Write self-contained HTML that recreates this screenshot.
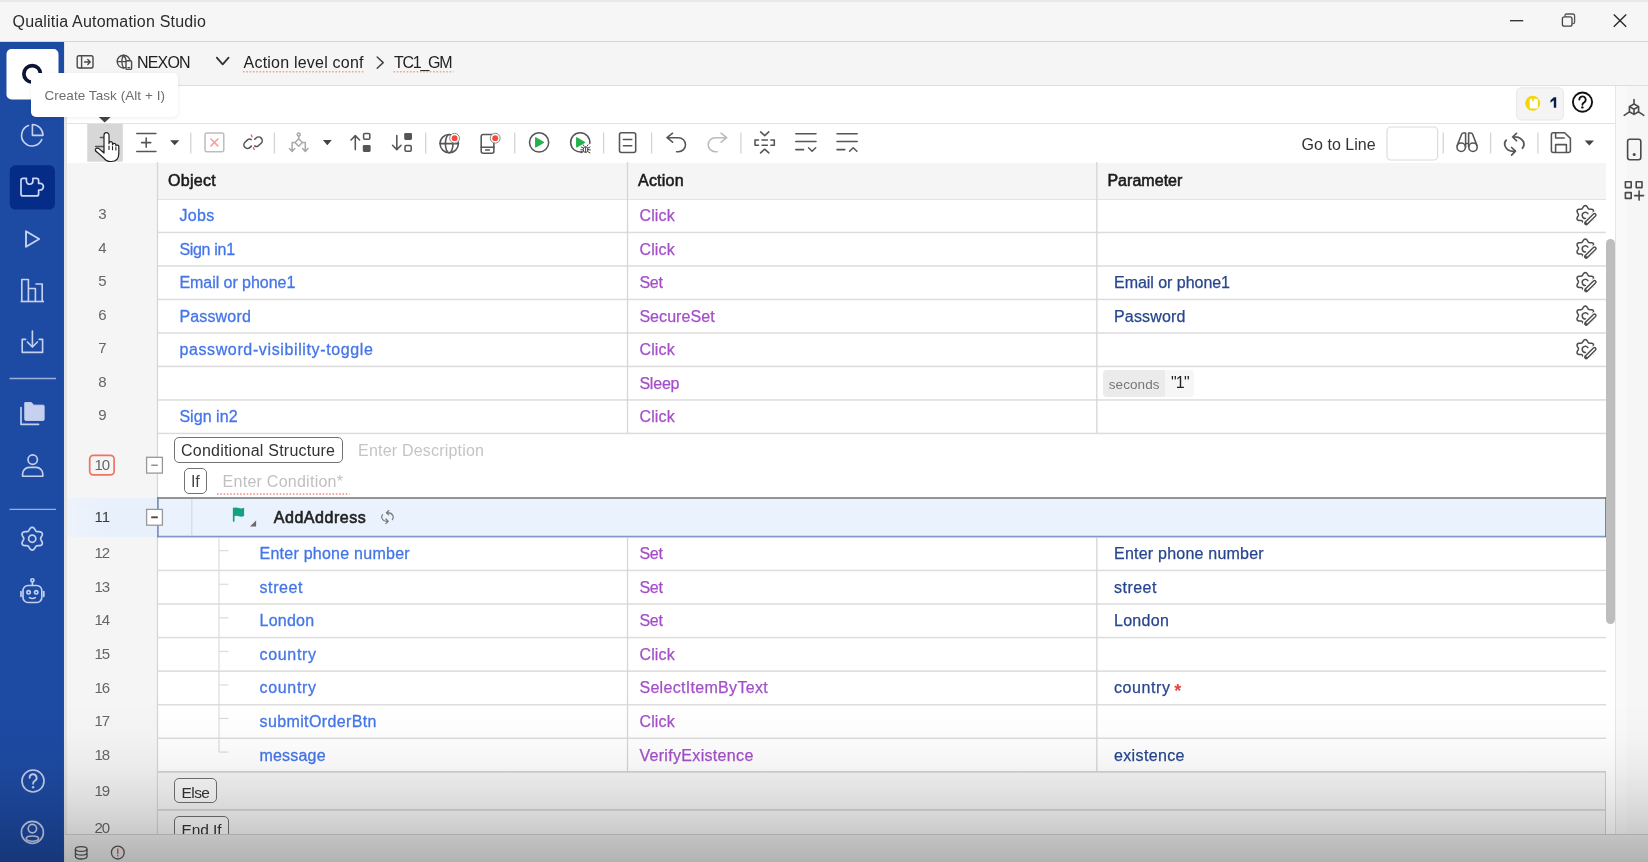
<!DOCTYPE html>
<html><head><meta charset="utf-8"><title>Qualitia Automation Studio</title>
<style>
*{box-sizing:border-box;margin:0;padding:0}
html,body{width:1648px;height:862px;overflow:hidden;background:#fff;font-family:"Liberation Sans",sans-serif;}
#root{position:relative;width:1648px;height:862px;overflow:hidden;background:#fff;filter:blur(.35px)}
.abs{position:absolute}
.txt{position:absolute;white-space:pre}
#fade{position:absolute;left:0;top:700px;width:1648px;height:162px;pointer-events:none;
background:linear-gradient(180deg,rgba(0,0,0,0) 0%,rgba(0,0,0,.012) 22%,rgba(0,0,0,.04) 40%,rgba(0,0,0,.085) 58%,rgba(0,0,0,.14) 74%,rgba(0,0,0,.20) 88%,rgba(0,0,0,.25) 100%)}
</style></head><body>
<div id="root">
<div class="abs" style="left:0px;top:0px;width:1648px;height:42px;background:#f6f6f6;border-bottom:1.5px solid #d6d6d6;"></div>
<div class="abs" style="left:0px;top:0px;width:1648px;height:2px;background:#e9e9e9;"></div>
<div class="txt" style="left:12.5px;top:11px;height:21px;line-height:21px;font-size:16px;color:#2b2b2b;font-weight:400;letter-spacing:0.198px;">Qualitia Automation Studio</div>
<div class="abs" style="left:0px;top:42px;width:64.4px;height:820px;background:#1d4aa3;border-right:1px solid #2b4b8c;"></div>
<div class="abs" style="left:64.4px;top:42px;width:2.2px;height:820px;background:#e4e4e4;"></div>
<div class="abs" style="left:65px;top:42px;width:1583px;height:43.5px;background:#f5f5f5;border-bottom:1px solid #dedede;"></div>
<div class="abs" style="left:67px;top:86px;width:1547.5px;height:38px;background:#fff;border-bottom:1.5px solid #e2e2e2;"></div>
<div class="abs" style="left:67px;top:124px;width:1547.5px;height:38px;background:#fff;"></div>
<div class="abs" style="left:1614.5px;top:86px;width:33.5px;height:748px;background:linear-gradient(90deg,#f9f9f9 0,#f9f9f9 10px,#f6f6f6 11px);border-left:1px solid #e6e6e6;"></div>
<div class="txt" style="left:137.0px;top:52px;height:21px;line-height:21px;font-size:16px;color:#222;font-weight:400;letter-spacing:-0.827px;">NEXON</div>
<div class="txt" style="left:243.6px;top:52px;height:21px;line-height:21px;font-size:16px;color:#222;font-weight:400;letter-spacing:0.212px;">Action level conf</div>
<div class="txt" style="left:394.0px;top:52px;height:21px;line-height:21px;font-size:16px;color:#222;font-weight:400;letter-spacing:-1.261px;">TC1_GM</div>
<div class="txt" style="left:1301.6px;top:134px;height:21px;line-height:21px;font-size:16px;color:#333;font-weight:400;letter-spacing:0.030px;">Go to Line</div>
<div class="abs" style="left:67px;top:162.5px;width:1539px;height:37.5px;background:#f5f5f5;border-bottom:1px solid #e2e2e2;"></div>
<div class="abs" style="left:67px;top:199px;width:90.5px;height:635px;background:#f5f5f5;"></div>
<div class="abs" style="left:1606px;top:162px;width:8.5px;height:672px;background:#fff;"></div>
<div class="txt" style="left:168.0px;top:170px;height:21px;line-height:21px;font-size:16px;color:#1a1a1a;font-weight:400;letter-spacing:0.270px;-webkit-text-stroke:0.55px #1a1a1a;">Object</div>
<div class="txt" style="left:638.0px;top:170px;height:21px;line-height:21px;font-size:16px;color:#1a1a1a;font-weight:400;letter-spacing:0.226px;-webkit-text-stroke:0.55px #1a1a1a;">Action</div>
<div class="txt" style="left:1107.4px;top:170px;height:21px;line-height:21px;font-size:16px;color:#1a1a1a;font-weight:400;letter-spacing:0.037px;-webkit-text-stroke:0.55px #1a1a1a;">Parameter</div>
<div class="txt" style="left:98.2px;top:203px;height:21px;line-height:21px;font-size:15px;color:#666;font-weight:400;letter-spacing:0.056px;">3</div>
<div class="txt" style="left:179.4px;top:205px;height:21px;line-height:21px;font-size:16px;color:#4476e8;font-weight:400;letter-spacing:0.334px;-webkit-text-stroke:0.3px #4476e8;">Jobs</div>
<div class="txt" style="left:639.4px;top:205px;height:21px;line-height:21px;font-size:16px;color:#a44fc9;font-weight:400;letter-spacing:0.182px;-webkit-text-stroke:0.25px #a44fc9;">Click</div>
<svg class="abs" style="left:157.5px;top:230px" width="1448.5" height="5"><rect x="0" y="1.70" width="1448.5" height="1.5" fill="#dcdcdc"/></svg>
<div class="txt" style="left:98.2px;top:237px;height:21px;line-height:21px;font-size:15px;color:#666;font-weight:400;letter-spacing:0.056px;">4</div>
<div class="txt" style="left:179.4px;top:239px;height:21px;line-height:21px;font-size:16px;color:#4476e8;font-weight:400;letter-spacing:-0.304px;-webkit-text-stroke:0.3px #4476e8;">Sign in1</div>
<div class="txt" style="left:639.4px;top:239px;height:21px;line-height:21px;font-size:16px;color:#a44fc9;font-weight:400;letter-spacing:0.182px;-webkit-text-stroke:0.25px #a44fc9;">Click</div>
<svg class="abs" style="left:157.5px;top:264px" width="1448.5" height="5"><rect x="0" y="1.20" width="1448.5" height="1.5" fill="#dcdcdc"/></svg>
<div class="txt" style="left:98.2px;top:270px;height:21px;line-height:21px;font-size:15px;color:#666;font-weight:400;letter-spacing:0.056px;">5</div>
<div class="txt" style="left:179.4px;top:272px;height:21px;line-height:21px;font-size:16px;color:#4476e8;font-weight:400;letter-spacing:-0.044px;-webkit-text-stroke:0.3px #4476e8;">Email or phone1</div>
<div class="txt" style="left:639.4px;top:272px;height:21px;line-height:21px;font-size:16px;color:#a44fc9;font-weight:400;letter-spacing:-0.258px;-webkit-text-stroke:0.25px #a44fc9;">Set</div>
<div class="txt" style="left:1114.0px;top:272px;height:21px;line-height:21px;font-size:16px;color:#27468f;font-weight:400;letter-spacing:-0.037px;-webkit-text-stroke:0.25px #27468f;">Email or phone1</div>
<svg class="abs" style="left:157.5px;top:297px" width="1448.5" height="5"><rect x="0" y="1.70" width="1448.5" height="1.5" fill="#dcdcdc"/></svg>
<div class="txt" style="left:98.2px;top:304px;height:21px;line-height:21px;font-size:15px;color:#666;font-weight:400;letter-spacing:0.056px;">6</div>
<div class="txt" style="left:179.4px;top:306px;height:21px;line-height:21px;font-size:16px;color:#4476e8;font-weight:400;letter-spacing:0.164px;-webkit-text-stroke:0.3px #4476e8;">Password</div>
<div class="txt" style="left:639.4px;top:306px;height:21px;line-height:21px;font-size:16px;color:#a44fc9;font-weight:400;letter-spacing:0.060px;-webkit-text-stroke:0.25px #a44fc9;">SecureSet</div>
<div class="txt" style="left:1114.0px;top:306px;height:21px;line-height:21px;font-size:16px;color:#27468f;font-weight:400;letter-spacing:0.179px;-webkit-text-stroke:0.25px #27468f;">Password</div>
<svg class="abs" style="left:157.5px;top:331px" width="1448.5" height="5"><rect x="0" y="1.20" width="1448.5" height="1.5" fill="#dcdcdc"/></svg>
<div class="txt" style="left:98.2px;top:337px;height:21px;line-height:21px;font-size:15px;color:#666;font-weight:400;letter-spacing:0.056px;">7</div>
<div class="txt" style="left:179.4px;top:339px;height:21px;line-height:21px;font-size:16px;color:#4476e8;font-weight:400;letter-spacing:0.626px;-webkit-text-stroke:0.3px #4476e8;">password-visibility-toggle</div>
<div class="txt" style="left:639.4px;top:339px;height:21px;line-height:21px;font-size:16px;color:#a44fc9;font-weight:400;letter-spacing:0.182px;-webkit-text-stroke:0.25px #a44fc9;">Click</div>
<svg class="abs" style="left:157.5px;top:364px" width="1448.5" height="5"><rect x="0" y="1.70" width="1448.5" height="1.5" fill="#dcdcdc"/></svg>
<div class="txt" style="left:98.2px;top:371px;height:21px;line-height:21px;font-size:15px;color:#666;font-weight:400;letter-spacing:0.056px;">8</div>
<div class="txt" style="left:639.4px;top:373px;height:21px;line-height:21px;font-size:16px;color:#a44fc9;font-weight:400;letter-spacing:-0.205px;-webkit-text-stroke:0.25px #a44fc9;">Sleep</div>
<svg class="abs" style="left:157.5px;top:398px" width="1448.5" height="5"><rect x="0" y="1.20" width="1448.5" height="1.5" fill="#dcdcdc"/></svg>
<div class="txt" style="left:98.2px;top:404px;height:21px;line-height:21px;font-size:15px;color:#666;font-weight:400;letter-spacing:0.056px;">9</div>
<div class="txt" style="left:179.4px;top:406px;height:21px;line-height:21px;font-size:16px;color:#4476e8;font-weight:400;letter-spacing:0.053px;-webkit-text-stroke:0.3px #4476e8;">Sign in2</div>
<div class="txt" style="left:639.4px;top:406px;height:21px;line-height:21px;font-size:16px;color:#a44fc9;font-weight:400;letter-spacing:0.182px;-webkit-text-stroke:0.25px #a44fc9;">Click</div>
<svg class="abs" style="left:157.5px;top:431px" width="1448.5" height="5"><rect x="0" y="1.70" width="1448.5" height="1.5" fill="#dcdcdc"/></svg>
<svg class="abs" style="left:155px;top:162px" width="5" height="672"><rect x="1.85" y="0" width="1.3" height="672" fill="#d6d6d6"/></svg>
<svg class="abs" style="left:625px;top:162px" width="5" height="271.4"><rect x="1.85" y="0" width="1.3" height="271.4" fill="#d6d6d6"/></svg>
<svg class="abs" style="left:1095px;top:162px" width="5" height="271.4"><rect x="1.15" y="0" width="1.3" height="271.4" fill="#d6d6d6"/></svg>
<div class="abs" style="left:1103px;top:370px;width:91.3px;height:26.7px;background:#f6f6f6;border-radius:4px;"></div>
<div class="abs" style="left:1103px;top:370px;width:62.2px;height:26.7px;background:#ebebeb;border-radius:4px 0 0 4px;"></div>
<div class="txt" style="left:1108.8px;top:375px;height:19px;line-height:19px;font-size:13.5px;color:#777;font-weight:400;letter-spacing:0.067px;">seconds</div>
<div class="txt" style="left:1171.0px;top:372px;height:21px;line-height:21px;font-size:16px;color:#222;font-weight:400;letter-spacing:-0.833px;">"1"</div>
<div class="txt" style="left:94.6px;top:454px;height:21px;line-height:21px;font-size:15px;color:#666;font-weight:400;letter-spacing:-1.088px;">10</div>
<div class="abs" style="left:174px;top:437px;width:169px;height:25.8px;background:#fff;border:1.3px solid #727272;border-radius:5px;"></div>
<div class="txt" style="left:181.0px;top:440px;height:21px;line-height:21px;font-size:16px;color:#333;font-weight:400;letter-spacing:0.229px;">Conditional Structure</div>
<div class="txt" style="left:358.0px;top:440px;height:21px;line-height:21px;font-size:16px;color:#c4c4c4;font-weight:400;letter-spacing:0.205px;">Enter Description</div>
<div class="abs" style="left:183.8px;top:468px;width:23px;height:25.8px;background:#fff;border:1.3px solid #727272;border-radius:5px;"></div>
<div class="txt" style="left:191.0px;top:471px;height:21px;line-height:21px;font-size:16px;color:#444;font-weight:400;letter-spacing:-0.291px;">If</div>
<div class="txt" style="left:222.6px;top:471px;height:21px;line-height:21px;font-size:16px;color:#c0c0c0;font-weight:400;letter-spacing:0.259px;">Enter Condition*</div>
<div class="abs" style="left:67px;top:497.6px;width:90.5px;height:39px;background:linear-gradient(90deg,#eef3fb,#e8f0fc 50%);"></div>
<div class="abs" style="left:157.5px;top:497.5px;width:1448.8px;height:39.3px;background:#eaf2fd;"></div>
<svg class="abs" style="left:157px;top:496px" width="1449.6" height="5"><rect x="0" y="1.20" width="1449.6" height="1.6" fill="#7c7c7c"/></svg>
<svg class="abs" style="left:157px;top:534px" width="1449.6" height="5"><rect x="0" y="1.75" width="1449.6" height="1.7" fill="#8298c4"/></svg>
<svg class="abs" style="left:156px;top:497.2px" width="5" height="40.19999999999999"><rect x="1.10" y="0" width="1.6" height="40.19999999999999" fill="#7488b4"/></svg>
<svg class="abs" style="left:1604px;top:497.2px" width="5" height="40.19999999999999"><rect x="1.20" y="0" width="1.4" height="40.19999999999999" fill="#6a6a6a"/></svg>
<svg class="abs" style="left:190px;top:499px" width="5" height="37"><rect x="1.20" y="0" width="1.2" height="37" fill="#d3dae6"/></svg>
<div class="txt" style="left:94.6px;top:506px;height:21px;line-height:21px;font-size:15px;color:#3a3a3a;font-weight:400;letter-spacing:0.022px;">11</div>
<div class="txt" style="left:273.8px;top:507px;height:21px;line-height:21px;font-size:16px;color:#222;font-weight:400;letter-spacing:0.536px;-webkit-text-stroke:0.6px #222;">AddAddress</div>
<div class="txt" style="left:94.6px;top:542px;height:21px;line-height:21px;font-size:15px;color:#666;font-weight:400;letter-spacing:-1.088px;">12</div>
<div class="txt" style="left:259.5px;top:543px;height:21px;line-height:21px;font-size:16px;color:#4476e8;font-weight:400;letter-spacing:0.249px;-webkit-text-stroke:0.3px #4476e8;">Enter phone number</div>
<div class="txt" style="left:639.4px;top:543px;height:21px;line-height:21px;font-size:16px;color:#a44fc9;font-weight:400;letter-spacing:-0.258px;-webkit-text-stroke:0.25px #a44fc9;">Set</div>
<div class="txt" style="left:1114.0px;top:543px;height:21px;line-height:21px;font-size:16px;color:#27468f;font-weight:400;letter-spacing:0.225px;-webkit-text-stroke:0.25px #27468f;">Enter phone number</div>
<svg class="abs" style="left:219px;top:549px" width="9.5" height="5"><rect x="0" y="1.15" width="9.5" height="1.1" fill="#d9d9d9"/></svg>
<svg class="abs" style="left:157.5px;top:568px" width="1448.5" height="5"><rect x="0" y="1.71" width="1448.5" height="1.5" fill="#dcdcdc"/></svg>
<div class="txt" style="left:94.6px;top:576px;height:21px;line-height:21px;font-size:15px;color:#666;font-weight:400;letter-spacing:-1.088px;">13</div>
<div class="txt" style="left:259.5px;top:577px;height:21px;line-height:21px;font-size:16px;color:#4476e8;font-weight:400;letter-spacing:0.597px;-webkit-text-stroke:0.3px #4476e8;">street</div>
<div class="txt" style="left:639.4px;top:577px;height:21px;line-height:21px;font-size:16px;color:#a44fc9;font-weight:400;letter-spacing:-0.258px;-webkit-text-stroke:0.25px #a44fc9;">Set</div>
<div class="txt" style="left:1114.0px;top:577px;height:21px;line-height:21px;font-size:16px;color:#27468f;font-weight:400;letter-spacing:0.477px;-webkit-text-stroke:0.25px #27468f;">street</div>
<svg class="abs" style="left:219px;top:582px" width="9.5" height="5"><rect x="0" y="1.71" width="9.5" height="1.1" fill="#d9d9d9"/></svg>
<svg class="abs" style="left:157.5px;top:602px" width="1448.5" height="5"><rect x="0" y="1.27" width="1448.5" height="1.5" fill="#dcdcdc"/></svg>
<div class="txt" style="left:94.6px;top:609px;height:21px;line-height:21px;font-size:15px;color:#666;font-weight:400;letter-spacing:-1.088px;">14</div>
<div class="txt" style="left:259.5px;top:610px;height:21px;line-height:21px;font-size:16px;color:#4476e8;font-weight:400;letter-spacing:0.242px;-webkit-text-stroke:0.3px #4476e8;">London</div>
<div class="txt" style="left:639.4px;top:610px;height:21px;line-height:21px;font-size:16px;color:#a44fc9;font-weight:400;letter-spacing:-0.258px;-webkit-text-stroke:0.25px #a44fc9;">Set</div>
<div class="txt" style="left:1114.0px;top:610px;height:21px;line-height:21px;font-size:16px;color:#27468f;font-weight:400;letter-spacing:0.282px;-webkit-text-stroke:0.25px #27468f;">London</div>
<svg class="abs" style="left:219px;top:616px" width="9.5" height="5"><rect x="0" y="1.27" width="9.5" height="1.1" fill="#d9d9d9"/></svg>
<svg class="abs" style="left:157.5px;top:635px" width="1448.5" height="5"><rect x="0" y="1.83" width="1448.5" height="1.5" fill="#dcdcdc"/></svg>
<div class="txt" style="left:94.6px;top:643px;height:21px;line-height:21px;font-size:15px;color:#666;font-weight:400;letter-spacing:-1.088px;">15</div>
<div class="txt" style="left:259.5px;top:644px;height:21px;line-height:21px;font-size:16px;color:#4476e8;font-weight:400;letter-spacing:0.672px;-webkit-text-stroke:0.3px #4476e8;">country</div>
<div class="txt" style="left:639.4px;top:644px;height:21px;line-height:21px;font-size:16px;color:#a44fc9;font-weight:400;letter-spacing:0.182px;-webkit-text-stroke:0.25px #a44fc9;">Click</div>
<svg class="abs" style="left:219px;top:649px" width="9.5" height="5"><rect x="0" y="1.83" width="9.5" height="1.1" fill="#d9d9d9"/></svg>
<svg class="abs" style="left:157.5px;top:669px" width="1448.5" height="5"><rect x="0" y="1.39" width="1448.5" height="1.5" fill="#dcdcdc"/></svg>
<div class="txt" style="left:94.6px;top:677px;height:21px;line-height:21px;font-size:15px;color:#666;font-weight:400;letter-spacing:-1.088px;">16</div>
<div class="txt" style="left:259.5px;top:677px;height:21px;line-height:21px;font-size:16px;color:#4476e8;font-weight:400;letter-spacing:0.672px;-webkit-text-stroke:0.3px #4476e8;">country</div>
<div class="txt" style="left:639.4px;top:677px;height:21px;line-height:21px;font-size:16px;color:#a44fc9;font-weight:400;letter-spacing:0.313px;-webkit-text-stroke:0.25px #a44fc9;">SelectItemByText</div>
<div class="txt" style="left:1114.0px;top:677px;height:21px;line-height:21px;font-size:16px;color:#27468f;font-weight:400;letter-spacing:0.589px;-webkit-text-stroke:0.25px #27468f;">country</div>
<svg class="abs" style="left:219px;top:683px" width="9.5" height="5"><rect x="0" y="1.39" width="9.5" height="1.1" fill="#d9d9d9"/></svg>
<svg class="abs" style="left:157.5px;top:702px" width="1448.5" height="5"><rect x="0" y="1.95" width="1448.5" height="1.5" fill="#dcdcdc"/></svg>
<div class="txt" style="left:94.6px;top:710px;height:21px;line-height:21px;font-size:15px;color:#666;font-weight:400;letter-spacing:-1.088px;">17</div>
<div class="txt" style="left:259.5px;top:711px;height:21px;line-height:21px;font-size:16px;color:#4476e8;font-weight:400;letter-spacing:0.381px;-webkit-text-stroke:0.3px #4476e8;">submitOrderBtn</div>
<div class="txt" style="left:639.4px;top:711px;height:21px;line-height:21px;font-size:16px;color:#a44fc9;font-weight:400;letter-spacing:0.182px;-webkit-text-stroke:0.25px #a44fc9;">Click</div>
<svg class="abs" style="left:219px;top:716px" width="9.5" height="5"><rect x="0" y="1.95" width="9.5" height="1.1" fill="#d9d9d9"/></svg>
<svg class="abs" style="left:157.5px;top:736px" width="1448.5" height="5"><rect x="0" y="1.51" width="1448.5" height="1.5" fill="#dcdcdc"/></svg>
<div class="txt" style="left:94.6px;top:744px;height:21px;line-height:21px;font-size:15px;color:#666;font-weight:400;letter-spacing:-1.088px;">18</div>
<div class="txt" style="left:259.5px;top:745px;height:21px;line-height:21px;font-size:16px;color:#4476e8;font-weight:400;letter-spacing:0.196px;-webkit-text-stroke:0.3px #4476e8;">message</div>
<div class="txt" style="left:639.4px;top:745px;height:21px;line-height:21px;font-size:16px;color:#a44fc9;font-weight:400;letter-spacing:0.322px;-webkit-text-stroke:0.25px #a44fc9;">VerifyExistence</div>
<div class="txt" style="left:1114.0px;top:745px;height:21px;line-height:21px;font-size:16px;color:#27468f;font-weight:400;letter-spacing:0.363px;-webkit-text-stroke:0.25px #27468f;">existence</div>
<svg class="abs" style="left:219px;top:750px" width="9.5" height="5"><rect x="0" y="1.51" width="9.5" height="1.1" fill="#d9d9d9"/></svg>
<svg class="abs" style="left:157.5px;top:770px" width="1448.5" height="5"><rect x="0" y="1.07" width="1448.5" height="1.5" fill="#dcdcdc"/></svg>
<div class="txt" style="left:1174.2px;top:679px;height:24px;line-height:24px;font-size:18px;color:#e5443a;font-weight:700;letter-spacing:0.000px;">*</div>
<svg class="abs" style="left:217px;top:537.5px" width="5" height="214.5"><rect x="1.45" y="0" width="1.1" height="214.5" fill="#d9d9d9"/></svg>
<svg class="abs" style="left:625px;top:537.5px" width="5" height="234.0"><rect x="1.85" y="0" width="1.3" height="234.0" fill="#d6d6d6"/></svg>
<svg class="abs" style="left:1095px;top:537.5px" width="5" height="234.0"><rect x="1.15" y="0" width="1.3" height="234.0" fill="#d6d6d6"/></svg>
<div class="abs" style="left:157.5px;top:772.2px;width:1448.5px;height:62px;background:#f6f6f6;border-right:1px solid #cfcfcf;"></div>
<svg class="abs" style="left:157.5px;top:808px" width="1448.5" height="5"><rect x="0" y="1.15" width="1448.5" height="1.5" fill="#cfcfcf"/></svg>
<svg class="abs" style="left:157.5px;top:770px" width="1448.5" height="5"><rect x="0" y="1.15" width="1448.5" height="1.5" fill="#cfcfcf"/></svg>
<div class="txt" style="left:94.6px;top:780px;height:21px;line-height:21px;font-size:15px;color:#666;font-weight:400;letter-spacing:-1.088px;">19</div>
<div class="txt" style="left:94.6px;top:817px;height:21px;line-height:21px;font-size:15px;color:#666;font-weight:400;letter-spacing:-1.088px;">20</div>
<div class="abs" style="left:174.3px;top:778.4px;width:42.8px;height:25px;background:#fafafa;border:1.3px solid #727272;border-radius:5px;"></div>
<div class="txt" style="left:181.4px;top:782px;height:21px;line-height:21px;font-size:15.5px;color:#333;font-weight:400;letter-spacing:-0.519px;">Else</div>
<div class="abs" style="left:174.3px;top:816px;width:54.4px;height:25px;background:#fafafa;border:1.3px solid #727272;border-radius:5px;"></div>
<div class="txt" style="left:181.4px;top:819px;height:21px;line-height:21px;font-size:15.5px;color:#333;font-weight:400;letter-spacing:-0.060px;">End If</div>
<div class="abs" style="left:1606px;top:239px;width:8.6px;height:384.5px;background:#bdbdbd;border-radius:4.5px;"></div>
<div class="abs" style="left:65px;top:834px;width:1583px;height:28px;background:#eeeeee;border-top:1px solid #d0d0d0;"></div>
<svg class="abs" style="left:0;top:0" width="1648" height="862" viewBox="0 0 1648 862">
<rect x="6.5" y="49" width="52" height="50.5" rx="5" fill="#fff"/>
<circle cx="32.2" cy="73.9" r="8.3" fill="none" stroke="#0a1634" stroke-width="3.7"/>
<g fill="none" stroke="#c5d1ef" stroke-width="1.65" stroke-linecap="round" stroke-linejoin="round"><path d="M41.8 139.5 A10.5 10.5 0 1 1 28.5 125.6"/><path d="M43 135.3 A10.8 10.8 0 0 0 32.4 124.5 V135.3 Z"/></g>
<rect x="9.8" y="165.3" width="45.1" height="44.2" rx="5.5" fill="#052c86"/>
<path d="M23 178.3 H26.4 V181 a3.25 3.25 0 0 0 6.5 0 V178.3 H36.6 a2 2 0 0 1 2 2 V183.4 h1.5 a3.3 3.3 0 0 1 0 6.6 h-1.5 V193.9 a2 2 0 0 1 -2 2 H23 a2 2 0 0 1 -2 -2 V180.3 a2 2 0 0 1 2 -2 Z" fill="none" stroke="#ccd8f6" stroke-width="1.7" stroke-linejoin="round"/>
<path d="M26 231.2 L39.2 239 L26 246.8 Z" fill="none" stroke="#c5d1ef" stroke-width="1.9" stroke-linejoin="round"/>
<g fill="none" stroke="#c5d1ef" stroke-width="1.65" stroke-linejoin="round"><path d="M21.8 301.5 V279.5 h6.6 V301.5"/><path d="M28.4 288.5 h7 V301.5"/><path d="M35.4 284 h6.8 V301.5"/><path d="M20.6 301.5 H44"/></g>
<g fill="none" stroke="#c5d1ef" stroke-width="1.65" stroke-linecap="round" stroke-linejoin="round"><path d="M32.4 331 V346.6"/><path d="M27.4 342 L32.4 347 L37.4 342"/><path d="M25.6 339.4 H22.2 V352.4 H42.6 V339.4 H39.2"/></g>
<path d="M9.5 378.5 H56" stroke="#c5d1ef" stroke-width="1.4" opacity=".75"/>
<path d="M21 407.6 V424.4 H38.6" fill="none" stroke="#c5d1ef" stroke-width="1.65" stroke-linejoin="round" stroke-linecap="round"/>
<path d="M24.8 402.6 h6.6 l2.3 2.6 h9.6 a.8 .8 0 0 1 .8 .8 V419.6 a.8 .8 0 0 1 -.8 .8 H25.6 a.8 .8 0 0 1 -.8 -.8 z" fill="#c5d1ef" stroke="#c5d1ef" stroke-width="1"/>
<g fill="none" stroke="#c5d1ef" stroke-width="1.65" stroke-linejoin="round"><circle cx="32.7" cy="459.6" r="4.7"/><path d="M22.6 476.2 v-2.2 a6.6 6.6 0 0 1 6.6 -6.6 h7 a6.6 6.6 0 0 1 6.6 6.6 v2.2 z"/></g>
<path d="M9.5 509.4 H56" stroke="#c5d1ef" stroke-width="1.4" opacity=".75"/>
<path d="M32.20 527.30 L32.94 527.44 L33.63 527.83 L34.24 528.43 L34.76 529.14 L35.20 529.87 L35.58 530.53 L35.97 531.06 L36.40 531.43 L36.93 531.62 L37.58 531.69 L38.35 531.69 L39.20 531.70 L40.07 531.79 L40.90 532.03 L41.58 532.43 L42.07 533.00 L42.32 533.71 L42.33 534.51 L42.12 535.33 L41.76 536.14 L41.35 536.88 L40.96 537.55 L40.70 538.14 L40.60 538.70 L40.70 539.26 L40.96 539.85 L41.35 540.52 L41.76 541.26 L42.12 542.07 L42.33 542.89 L42.32 543.69 L42.07 544.40 L41.58 544.97 L40.90 545.37 L40.07 545.61 L39.20 545.70 L38.35 545.71 L37.58 545.71 L36.93 545.78 L36.40 545.97 L35.97 546.34 L35.58 546.87 L35.20 547.53 L34.76 548.26 L34.24 548.97 L33.63 549.57 L32.94 549.96 L32.20 550.10 L31.46 549.96 L30.77 549.57 L30.16 548.97 L29.64 548.26 L29.20 547.53 L28.82 546.87 L28.43 546.34 L28.00 545.97 L27.47 545.78 L26.82 545.71 L26.05 545.71 L25.20 545.70 L24.33 545.61 L23.50 545.37 L22.82 544.97 L22.33 544.40 L22.08 543.69 L22.07 542.89 L22.28 542.07 L22.64 541.26 L23.05 540.52 L23.44 539.85 L23.70 539.26 L23.80 538.70 L23.70 538.14 L23.44 537.55 L23.05 536.88 L22.64 536.14 L22.28 535.33 L22.07 534.51 L22.08 533.71 L22.33 533.00 L22.82 532.43 L23.50 532.03 L24.33 531.79 L25.20 531.70 L26.05 531.69 L26.82 531.69 L27.47 531.62 L28.00 531.43 L28.43 531.06 L28.82 530.53 L29.20 529.87 L29.64 529.14 L30.16 528.43 L30.77 527.83 L31.46 527.44Z" fill="none" stroke="#c5d1ef" stroke-width="1.7" stroke-linejoin="round"/><circle cx="32.2" cy="538.7" r="3.6" fill="none" stroke="#c5d1ef" stroke-width="1.7"/>
<g fill="none" stroke="#c5d1ef" stroke-width="1.65" stroke-linejoin="round" stroke-linecap="round"><rect x="23" y="585.5" width="18.8" height="17" rx="5"/><path d="M32.4 585.5 V582"/><circle cx="32.4" cy="580.3" r="1.6"/><path d="M21 591.5 v5 M43.8 591.5 v5"/><circle cx="28.6" cy="592.3" r="1.7"/><circle cx="36.2" cy="592.3" r="1.7"/><path d="M29.5 597.6 q2.9 1.8 5.8 0"/></g>
<circle cx="33" cy="781" r="11" fill="none" stroke="#c5d1ef" stroke-width="1.65"/>
<path d="M29.6 777.8 a3.5 3.5 0 1 1 5.2 3 q-1.7 1 -1.7 2.9" fill="none" stroke="#c5d1ef" stroke-width="1.9" stroke-linecap="round"/><circle cx="33.1" cy="787.2" r="1.2" fill="#c5d1ef"/>
<g fill="none" stroke="#c5d1ef" stroke-width="1.65"><circle cx="32.4" cy="832.4" r="11"/><circle cx="32.4" cy="828.6" r="4.2"/><ellipse cx="32.4" cy="838.6" rx="6.2" ry="2.6"/></g>
<rect x="87.2" y="124" width="35.6" height="37.7" fill="#d7d7d7"/>
<g fill="none" stroke="#555" stroke-width="1.55" stroke-linecap="round" stroke-linejoin="round"><path d="M100.5 137.4 H108 M95.6 146.4 H112 M96 151.4 H112"/></g>
<path d="M104 146.5 V135.2 a2.5 2.5 0 0 1 5 0 V143.6 a1.75 1.75 0 0 1 3.5 -.4 V144.8 a1.75 1.75 0 0 1 3.4 -.2 V146 a1.5 1.5 0 0 1 2.9 .4 V153.5 q0 8 -7.6 8 h-1.2 q-3.6 0 -6 -3.2 L95.8 151 q-1.2 -1.7 .4 -2.6 q1.5 -.8 3 .5 L104 153 Z" fill="#fff" stroke="#222" stroke-width="1.2" stroke-linejoin="round"/><path d="M109 146 V149.5 M112.5 146.5 V149.8 M115.9 147.5 V150" stroke="#222" stroke-width="1.1" stroke-linecap="round"/>
<g fill="none" stroke="#555" stroke-width="1.55" stroke-linecap="round" stroke-linejoin="round"><path d="M136.8 133.5 H155.9 M136.8 151.4 H155.9 M141.6 142.6 H150.8 M146.2 138 V147.2"/></g>
<path d="M170.1 140.2 H179.3 L174.7 145.2 Z" fill="#444"/>
<path d="M190.8 132.5 V153.5" stroke="#d4d4d4" stroke-width="1.3"/>
<rect x="205" y="133" width="18.8" height="18.8" rx="2" fill="none" stroke="#bdbdbd" stroke-width="1.5"/>
<path d="M211 139 L217.8 145.8 M217.8 139 L211 145.8" stroke="#f6a39b" stroke-width="1.7" stroke-linecap="round"/>
<g fill="none" stroke="#555" stroke-width="1.55" stroke-linecap="round" stroke-linejoin="round" stroke-width="1.9"><path d="M251.2 139.6 q-1.6 -1.3 -3.4 0 l-2.8 2.6 a3.6 3.6 0 0 0 5 5.2 l1.4 -1.3"/><path d="M254.8 146 q1.7 1.2 3.5 -.2 l2.8 -2.6 a3.6 3.6 0 0 0 -5 -5.2 l-1.4 1.3"/></g>
<path d="M251.3 135 l.7 1.9 M253.4 147.6 l.8 1.9" stroke="#f0524a" stroke-width="1.3" stroke-linecap="round"/>
<path d="M274.4 132.5 V153.5" stroke="#d4d4d4" stroke-width="1.3"/>
<g fill="none" stroke="#a9a9a9" stroke-width="1.5" stroke-linecap="round" stroke-linejoin="round"><circle cx="298.7" cy="134.4" r="1.5"/><path d="M298.7 136 V138.8 M298.7 138.8 L302.4 142.5 L298.7 146.2 L295 142.5 Z M295 142.5 H292.1 V151 M302.4 142.5 H305.3 V151 M289.4 148.6 L292.1 151.4 L294.8 148.6 M302.6 148.6 L305.3 151.4 L308 148.6"/></g>
<path d="M322.9 139.9 H331.8 L327.35 145.2 Z" fill="#444"/>
<g fill="none" stroke="#555" stroke-width="1.55" stroke-linecap="round" stroke-linejoin="round"><path d="M355.3 149.6 V135.8 M351 140 L355.3 135.6 L359.6 140"/><rect x="363.6" y="133.4" width="6.2" height="5.8" rx="1.2"/></g>
<rect x="362.8" y="145" width="7.8" height="6.9" rx="1.3" fill="#555"/>
<g fill="none" stroke="#555" stroke-width="1.55" stroke-linecap="round" stroke-linejoin="round"><path d="M396.8 135.6 V149.4 M392.5 145.2 L396.8 149.6 L401.1 145.2"/><rect x="405" y="145.5" width="6.2" height="5.8" rx="1.2"/></g>
<rect x="404.2" y="133" width="7.8" height="6.9" rx="1.3" fill="#555"/>
<path d="M425.7 132.5 V153.5" stroke="#d4d4d4" stroke-width="1.3"/>
<g fill="none" stroke="#555" stroke-width="1.55" stroke-linecap="round" stroke-linejoin="round"><circle cx="449.2" cy="143.6" r="9.2"/><ellipse cx="449.2" cy="143.6" rx="3.8" ry="9.2"/><path d="M440 143.6 H458.4"/></g>
<circle cx="454.6" cy="138.2" r="4.9" fill="#fff" stroke="#8a8a8a" stroke-width="1"/><circle cx="454.6" cy="138.2" r="2.9" fill="#f5483d"/>
<g fill="none" stroke="#555" stroke-width="1.55" stroke-linecap="round" stroke-linejoin="round"><rect x="481.2" y="134.5" width="12.7" height="18.8" rx="2"/><path d="M481.2 147.2 H493.9 M485.6 149.9 H489.4"/></g>
<circle cx="495.2" cy="138.2" r="4.9" fill="#fff" stroke="#8a8a8a" stroke-width="1"/><circle cx="495.2" cy="138.2" r="2.9" fill="#f5483d"/>
<path d="M514.7 132.5 V153.5" stroke="#d4d4d4" stroke-width="1.3"/>
<circle cx="539.1" cy="142.4" r="9.6" fill="none" stroke="#555" stroke-width="1.55" stroke-linecap="round" stroke-linejoin="round"/><path d="M535.6 137.6 L543.9 142.4 L535.6 147.2 Z" fill="#22b14c" stroke="#22b14c" stroke-width="1" stroke-linejoin="round"/>
<path d="M582 151.8 A9.6 9.6 0 1 1 589.8 143.4" fill="none" stroke="#555" stroke-width="1.55" stroke-linecap="round" stroke-linejoin="round"/><path d="M576.6 137.6 L584.9 142.4 L576.6 147.2 Z" fill="#22b14c" stroke="#22b14c" stroke-width="1" stroke-linejoin="round"/>
<g stroke="#444" stroke-width="1" stroke-linecap="round"><ellipse cx="585.6" cy="149.6" rx="2.4" ry="2.9" fill="#fff"/><path d="M585.6 147.4 V152"/><path d="M581.2 147 l2 1 M590 147 l-2 1 M580.8 149.8 h2.2 M590.4 149.8 h-2.2 M581.2 152.8 l2 -1 M590 152.8 l-2 -1 M584 146 l-.8 -1.2 M587.2 146 l.8 -1.2"/></g>
<path d="M603.6 132.5 V153.5" stroke="#d4d4d4" stroke-width="1.3"/>
<g fill="none" stroke="#555" stroke-width="1.55" stroke-linecap="round" stroke-linejoin="round" stroke-width="1.8"><rect x="619.5" y="132.8" width="16.2" height="19.6" rx="2"/><path d="M623.4 139.4 H631.8 M623.4 145.7 H631.8"/></g>
<path d="M651.6 132.5 V153.5" stroke="#d4d4d4" stroke-width="1.3"/>
<path d="M672.6 133.2 L667 137.7 L672.6 142.2 M667 137.7 H678.5 a7 7 0 0 1 0 14 H676.6" fill="none" stroke="#555" stroke-width="1.55" stroke-linecap="round" stroke-linejoin="round"/>
<path d="M721.1 133.2 L726.7 137.7 L721.1 142.2 M726.7 137.7 H715.2 a7 7 0 0 0 0 14 H717.1" fill="none" stroke="#bcbcbc" stroke-width="1.6" stroke-linecap="round" stroke-linejoin="round"/>
<path d="M740.9 132.5 V153.5" stroke="#d4d4d4" stroke-width="1.3"/>
<g fill="none" stroke="#555" stroke-width="1.55" stroke-linecap="round" stroke-linejoin="round"><path d="M760.6 131.9 L764.7 135.6 L768.8 131.9 M760.6 152.9 L764.7 149.2 L768.8 152.9"/><path d="M758.5 139.9 H755 V145.2 H758.5 M770.9 139.9 H774.3 V145.2 H770.9 M762 139.9 H767.4 M762 145.2 H767.4"/></g>
<g fill="none" stroke="#555" stroke-width="1.55" stroke-linecap="round" stroke-linejoin="round"><path d="M795.8 133.8 H816 M795.8 141.5 H816 M795.8 149.6 H803.6 M808.6 147.8 L812.1 151.2 L815.7 147.8"/></g>
<g fill="none" stroke="#555" stroke-width="1.55" stroke-linecap="round" stroke-linejoin="round"><path d="M837 133.8 H857.2 M837 141.5 H857.2 M837 149.6 H844.8 M849.6 151.2 L853.2 147.7 L856.9 151.2"/></g>
<rect x="1387" y="127" width="50.6" height="33" rx="4" fill="#fff" stroke="#dcdcdc" stroke-width="1.2"/>
<path d="M1443.2 132.5 V153.5" stroke="#d4d4d4" stroke-width="1.3"/>
<path d="M1490.6 132.5 V153.5" stroke="#d4d4d4" stroke-width="1.3"/>
<path d="M1537.9 132.5 V153.5" stroke="#d4d4d4" stroke-width="1.3"/>
<g fill="none" stroke="#555" stroke-width="1.55" stroke-linecap="round" stroke-linejoin="round"><circle cx="1461.2" cy="147.2" r="4.2"/><circle cx="1473" cy="147.2" r="4.2"/><path d="M1457.2 145.6 L1461.6 134.2 q.5 -1.2 1.8 -1.2 h2.2 V147 M1477 145.6 L1472.6 134.2 q-.5 -1.2 -1.8 -1.2 h-2.2 V147 M1465.6 143.4 H1468.6 M1465.6 133 V143"/></g>
<path d="M1512.60 137.00 Q1520.50 136.00 1523.60 142.00 Q1524.80 145.50 1522.40 148.30 M1516.50 133.30 L1512.60 137.00 L1516.50 140.60 M1515.50 151.20 Q1507.60 152.20 1505.00 146.00 Q1503.80 142.80 1506.20 140.20 M1511.60 147.50 L1515.50 151.20 L1511.60 155.20" fill="none" stroke="#555" stroke-width="1.7" stroke-linecap="round" stroke-linejoin="round"/>
<g fill="none" stroke="#555" stroke-width="1.55" stroke-linecap="round" stroke-linejoin="round" stroke-width="1.8"><path d="M1553.4 132.8 H1564.6 L1570.4 138.4 V150.4 a2 2 0 0 1 -2 2 H1553.4 a2 2 0 0 1 -2 -2 V134.8 a2 2 0 0 1 2 -2 Z"/><path d="M1555.6 133 V138 H1564.2 M1555.6 152.2 V144.6 H1566.4 V152.2"/></g>
<path d="M1584.7 140.4 H1594 L1589.35 145.4 Z" fill="#444"/>
<rect x="1516.6" y="87.8" width="46.8" height="32.2" rx="4.5" fill="#f4f4f4" stroke="#e7e7e7" stroke-width="1"/>
<circle cx="1532.7" cy="103.3" r="7.5" fill="#f4d40f"/><path d="M1530.9 98.8 H1532.2 V101.3 H1533.8 V98.8 H1536.7 a1.2 1.2 0 0 1 1.2 1.2 V107.2 a1.2 1.2 0 0 1 -1.2 1.2 H1530.9 a1.2 1.2 0 0 1 -1.2 -1.2 V100 a1.2 1.2 0 0 1 1.2 -1.2 Z" fill="#fff"/>
<circle cx="1582.5" cy="102.1" r="9.6" fill="#fff" stroke="#111" stroke-width="1.9"/>
<path d="M1579.3 99.6 a3.2 3.2 0 1 1 4.9 2.7 q-1.8 1 -1.8 2.5" fill="none" stroke="#111" stroke-width="1.9" stroke-linecap="round"/><circle cx="1582.4" cy="107.4" r="1.2" fill="#111"/>
<g fill="none" stroke="#4a4a4a" stroke-width="1.6" stroke-linecap="round" stroke-linejoin="round"><path d="M1634 99.6 V104 M1634 104 L1638.6 106.6 V111.8 L1634 114.4 L1629.4 111.8 V106.6 Z M1629.4 106.6 L1634 109.2 L1638.6 106.6 M1634 109.2 V114.4 M1629.4 111.8 L1624.2 115.4 M1638.6 111.8 L1643.8 115.4"/></g>
<g fill="none" stroke="#4a4a4a" stroke-width="1.6" stroke-linecap="round" stroke-linejoin="round" stroke-width="1.8"><rect x="1627.6" y="139.2" width="13.2" height="20.6" rx="2.2"/></g><circle cx="1634.2" cy="154.6" r="1.5" fill="#4a4a4a"/>
<g fill="none" stroke="#4a4a4a" stroke-width="1.6" stroke-linecap="round" stroke-linejoin="round" stroke-width="1.5" stroke-linejoin="miter"><rect x="1625.4" y="181.8" width="5.8" height="5.8"/><rect x="1636.2" y="181.8" width="5.8" height="5.8"/><rect x="1625.4" y="192.6" width="5.8" height="5.8"/><path d="M1634.6 195.6 H1643.6 M1639.1 191.1 V200.1"/></g>
<path d="M243 71.8 H364 M393.5 71.8 H453.5" stroke="#f3a393" stroke-width="1.6" stroke-dasharray="1.6 1.7"/>
<path d="M217 494 H349.5" stroke="#f08b80" stroke-width="1.7" stroke-dasharray="1.6 1.7"/>
<rect x="89.7" y="455.3" width="24.4" height="19.6" rx="3.6" fill="none" stroke="#f07360" stroke-width="1.7"/>
<rect x="146.6" y="457.3" width="15.8" height="15.8" fill="#fff" stroke="#989898" stroke-width="1.3"/><path d="M151.2 465.2 H157.8" stroke="#808080" stroke-width="1.3"/>
<rect x="146.6" y="509.40000000000003" width="15.8" height="15.8" fill="#fff" stroke="#989898" stroke-width="1.3"/><path d="M151.2 517.3 H157.8" stroke="#4a4a4a" stroke-width="1.9"/>
<path d="M1550.5 100.3 L1553.9 97.2 H1556.2 V107.8 H1553.8 V100.2 L1550.5 102.7 Z" fill="#0a1a50"/>
<path d="M1585.30 205.55 L1585.90 205.66 L1586.47 205.99 L1586.96 206.49 L1587.38 207.07 L1587.73 207.68 L1588.04 208.23 L1588.35 208.67 L1588.70 208.96 L1589.13 209.12 L1589.66 209.16 L1590.29 209.16 L1590.99 209.16 L1591.71 209.23 L1592.39 209.41 L1592.95 209.74 L1593.35 210.20 L1593.56 210.78 L1593.55 211.43 L1593.38 212.11 L1593.08 212.77 L1592.73 213.37 L1592.40 213.91 L1592.18 214.40 L1592.10 214.85 L1592.18 215.30 L1592.40 215.79 L1592.73 216.33 L1593.08 216.93 L1593.38 217.59 L1593.55 218.27 L1593.56 218.92 L1593.35 219.50 L1592.95 219.96 L1592.39 220.29 L1591.71 220.47 L1590.99 220.54 L1590.29 220.54 L1589.66 220.54 L1589.13 220.58 L1588.70 220.74 L1588.35 221.03 L1588.04 221.47 L1587.73 222.02 L1587.38 222.63 L1586.96 223.21 L1586.47 223.71 L1585.90 224.04 L1585.30 224.15 L1584.70 224.04 L1584.13 223.71 L1583.64 223.21 L1583.22 222.63 L1582.87 222.02 L1582.56 221.47 L1582.25 221.03 L1581.90 220.74 L1581.47 220.58 L1580.94 220.54 L1580.31 220.54 L1579.61 220.54 L1578.89 220.47 L1578.21 220.29 L1577.65 219.96 L1577.25 219.50 L1577.04 218.92 L1577.05 218.27 L1577.22 217.59 L1577.52 216.93 L1577.87 216.33 L1578.20 215.79 L1578.42 215.30 L1578.50 214.85 L1578.42 214.40 L1578.20 213.91 L1577.87 213.37 L1577.52 212.77 L1577.22 212.11 L1577.05 211.43 L1577.04 210.78 L1577.25 210.20 L1577.65 209.74 L1578.21 209.41 L1578.89 209.23 L1579.61 209.16 L1580.31 209.16 L1580.94 209.16 L1581.47 209.12 L1581.90 208.96 L1582.25 208.67 L1582.56 208.23 L1582.87 207.68 L1583.22 207.07 L1583.64 206.49 L1584.13 205.99 L1584.70 205.66Z" fill="none" stroke="#4d4d4d" stroke-width="1.5" stroke-linejoin="round"/><path d="M1587.90 213.65 A3.1 3.1 0 1 0 1585.70 218.45" fill="none" stroke="#4d4d4d" stroke-width="1.5" stroke-linecap="round"/><path d="M1594.50 214.95 L1586.20 223.15" stroke="#fff" stroke-width="6.4" stroke-linecap="round"/><path d="M1594.50 214.95 L1586.20 223.15" stroke="#4d4d4d" stroke-width="4.3" stroke-linecap="round"/><path d="M1594.50 214.95 L1587.10 222.25" stroke="#fff" stroke-width="1.5" stroke-linecap="round"/>
<path d="M1585.30 239.05 L1585.90 239.16 L1586.47 239.49 L1586.96 239.99 L1587.38 240.57 L1587.73 241.18 L1588.04 241.73 L1588.35 242.17 L1588.70 242.46 L1589.13 242.62 L1589.66 242.66 L1590.29 242.66 L1590.99 242.66 L1591.71 242.73 L1592.39 242.91 L1592.95 243.24 L1593.35 243.70 L1593.56 244.28 L1593.55 244.93 L1593.38 245.61 L1593.08 246.27 L1592.73 246.87 L1592.40 247.41 L1592.18 247.90 L1592.10 248.35 L1592.18 248.80 L1592.40 249.29 L1592.73 249.83 L1593.08 250.43 L1593.38 251.09 L1593.55 251.77 L1593.56 252.42 L1593.35 253.00 L1592.95 253.46 L1592.39 253.79 L1591.71 253.97 L1590.99 254.04 L1590.29 254.04 L1589.66 254.04 L1589.13 254.08 L1588.70 254.24 L1588.35 254.53 L1588.04 254.97 L1587.73 255.52 L1587.38 256.13 L1586.96 256.71 L1586.47 257.21 L1585.90 257.54 L1585.30 257.65 L1584.70 257.54 L1584.13 257.21 L1583.64 256.71 L1583.22 256.13 L1582.87 255.52 L1582.56 254.97 L1582.25 254.53 L1581.90 254.24 L1581.47 254.08 L1580.94 254.04 L1580.31 254.04 L1579.61 254.04 L1578.89 253.97 L1578.21 253.79 L1577.65 253.46 L1577.25 253.00 L1577.04 252.42 L1577.05 251.77 L1577.22 251.09 L1577.52 250.43 L1577.87 249.83 L1578.20 249.29 L1578.42 248.80 L1578.50 248.35 L1578.42 247.90 L1578.20 247.41 L1577.87 246.87 L1577.52 246.27 L1577.22 245.61 L1577.05 244.93 L1577.04 244.28 L1577.25 243.70 L1577.65 243.24 L1578.21 242.91 L1578.89 242.73 L1579.61 242.66 L1580.31 242.66 L1580.94 242.66 L1581.47 242.62 L1581.90 242.46 L1582.25 242.17 L1582.56 241.73 L1582.87 241.18 L1583.22 240.57 L1583.64 239.99 L1584.13 239.49 L1584.70 239.16Z" fill="none" stroke="#4d4d4d" stroke-width="1.5" stroke-linejoin="round"/><path d="M1587.90 247.15 A3.1 3.1 0 1 0 1585.70 251.95" fill="none" stroke="#4d4d4d" stroke-width="1.5" stroke-linecap="round"/><path d="M1594.50 248.45 L1586.20 256.65" stroke="#fff" stroke-width="6.4" stroke-linecap="round"/><path d="M1594.50 248.45 L1586.20 256.65" stroke="#4d4d4d" stroke-width="4.3" stroke-linecap="round"/><path d="M1594.50 248.45 L1587.10 255.75" stroke="#fff" stroke-width="1.5" stroke-linecap="round"/>
<path d="M1585.30 272.55 L1585.90 272.66 L1586.47 272.99 L1586.96 273.49 L1587.38 274.07 L1587.73 274.68 L1588.04 275.23 L1588.35 275.67 L1588.70 275.96 L1589.13 276.12 L1589.66 276.16 L1590.29 276.16 L1590.99 276.16 L1591.71 276.23 L1592.39 276.41 L1592.95 276.74 L1593.35 277.20 L1593.56 277.78 L1593.55 278.43 L1593.38 279.11 L1593.08 279.77 L1592.73 280.37 L1592.40 280.91 L1592.18 281.40 L1592.10 281.85 L1592.18 282.30 L1592.40 282.79 L1592.73 283.33 L1593.08 283.93 L1593.38 284.59 L1593.55 285.27 L1593.56 285.92 L1593.35 286.50 L1592.95 286.96 L1592.39 287.29 L1591.71 287.47 L1590.99 287.54 L1590.29 287.54 L1589.66 287.54 L1589.13 287.58 L1588.70 287.74 L1588.35 288.03 L1588.04 288.47 L1587.73 289.02 L1587.38 289.63 L1586.96 290.21 L1586.47 290.71 L1585.90 291.04 L1585.30 291.15 L1584.70 291.04 L1584.13 290.71 L1583.64 290.21 L1583.22 289.63 L1582.87 289.02 L1582.56 288.47 L1582.25 288.03 L1581.90 287.74 L1581.47 287.58 L1580.94 287.54 L1580.31 287.54 L1579.61 287.54 L1578.89 287.47 L1578.21 287.29 L1577.65 286.96 L1577.25 286.50 L1577.04 285.92 L1577.05 285.27 L1577.22 284.59 L1577.52 283.93 L1577.87 283.33 L1578.20 282.79 L1578.42 282.30 L1578.50 281.85 L1578.42 281.40 L1578.20 280.91 L1577.87 280.37 L1577.52 279.77 L1577.22 279.11 L1577.05 278.43 L1577.04 277.78 L1577.25 277.20 L1577.65 276.74 L1578.21 276.41 L1578.89 276.23 L1579.61 276.16 L1580.31 276.16 L1580.94 276.16 L1581.47 276.12 L1581.90 275.96 L1582.25 275.67 L1582.56 275.23 L1582.87 274.68 L1583.22 274.07 L1583.64 273.49 L1584.13 272.99 L1584.70 272.66Z" fill="none" stroke="#4d4d4d" stroke-width="1.5" stroke-linejoin="round"/><path d="M1587.90 280.65 A3.1 3.1 0 1 0 1585.70 285.45" fill="none" stroke="#4d4d4d" stroke-width="1.5" stroke-linecap="round"/><path d="M1594.50 281.95 L1586.20 290.15" stroke="#fff" stroke-width="6.4" stroke-linecap="round"/><path d="M1594.50 281.95 L1586.20 290.15" stroke="#4d4d4d" stroke-width="4.3" stroke-linecap="round"/><path d="M1594.50 281.95 L1587.10 289.25" stroke="#fff" stroke-width="1.5" stroke-linecap="round"/>
<path d="M1585.30 306.05 L1585.90 306.16 L1586.47 306.49 L1586.96 306.99 L1587.38 307.57 L1587.73 308.18 L1588.04 308.73 L1588.35 309.17 L1588.70 309.46 L1589.13 309.62 L1589.66 309.66 L1590.29 309.66 L1590.99 309.66 L1591.71 309.73 L1592.39 309.91 L1592.95 310.24 L1593.35 310.70 L1593.56 311.28 L1593.55 311.93 L1593.38 312.61 L1593.08 313.27 L1592.73 313.87 L1592.40 314.41 L1592.18 314.90 L1592.10 315.35 L1592.18 315.80 L1592.40 316.29 L1592.73 316.83 L1593.08 317.43 L1593.38 318.09 L1593.55 318.77 L1593.56 319.42 L1593.35 320.00 L1592.95 320.46 L1592.39 320.79 L1591.71 320.97 L1590.99 321.04 L1590.29 321.04 L1589.66 321.04 L1589.13 321.08 L1588.70 321.24 L1588.35 321.53 L1588.04 321.97 L1587.73 322.52 L1587.38 323.13 L1586.96 323.71 L1586.47 324.21 L1585.90 324.54 L1585.30 324.65 L1584.70 324.54 L1584.13 324.21 L1583.64 323.71 L1583.22 323.13 L1582.87 322.52 L1582.56 321.97 L1582.25 321.53 L1581.90 321.24 L1581.47 321.08 L1580.94 321.04 L1580.31 321.04 L1579.61 321.04 L1578.89 320.97 L1578.21 320.79 L1577.65 320.46 L1577.25 320.00 L1577.04 319.42 L1577.05 318.77 L1577.22 318.09 L1577.52 317.43 L1577.87 316.83 L1578.20 316.29 L1578.42 315.80 L1578.50 315.35 L1578.42 314.90 L1578.20 314.41 L1577.87 313.87 L1577.52 313.27 L1577.22 312.61 L1577.05 311.93 L1577.04 311.28 L1577.25 310.70 L1577.65 310.24 L1578.21 309.91 L1578.89 309.73 L1579.61 309.66 L1580.31 309.66 L1580.94 309.66 L1581.47 309.62 L1581.90 309.46 L1582.25 309.17 L1582.56 308.73 L1582.87 308.18 L1583.22 307.57 L1583.64 306.99 L1584.13 306.49 L1584.70 306.16Z" fill="none" stroke="#4d4d4d" stroke-width="1.5" stroke-linejoin="round"/><path d="M1587.90 314.15 A3.1 3.1 0 1 0 1585.70 318.95" fill="none" stroke="#4d4d4d" stroke-width="1.5" stroke-linecap="round"/><path d="M1594.50 315.45 L1586.20 323.65" stroke="#fff" stroke-width="6.4" stroke-linecap="round"/><path d="M1594.50 315.45 L1586.20 323.65" stroke="#4d4d4d" stroke-width="4.3" stroke-linecap="round"/><path d="M1594.50 315.45 L1587.10 322.75" stroke="#fff" stroke-width="1.5" stroke-linecap="round"/>
<path d="M1585.30 339.55 L1585.90 339.66 L1586.47 339.99 L1586.96 340.49 L1587.38 341.07 L1587.73 341.68 L1588.04 342.23 L1588.35 342.67 L1588.70 342.96 L1589.13 343.12 L1589.66 343.16 L1590.29 343.16 L1590.99 343.16 L1591.71 343.23 L1592.39 343.41 L1592.95 343.74 L1593.35 344.20 L1593.56 344.78 L1593.55 345.43 L1593.38 346.11 L1593.08 346.77 L1592.73 347.37 L1592.40 347.91 L1592.18 348.40 L1592.10 348.85 L1592.18 349.30 L1592.40 349.79 L1592.73 350.33 L1593.08 350.93 L1593.38 351.59 L1593.55 352.27 L1593.56 352.92 L1593.35 353.50 L1592.95 353.96 L1592.39 354.29 L1591.71 354.47 L1590.99 354.54 L1590.29 354.54 L1589.66 354.54 L1589.13 354.58 L1588.70 354.74 L1588.35 355.03 L1588.04 355.47 L1587.73 356.02 L1587.38 356.63 L1586.96 357.21 L1586.47 357.71 L1585.90 358.04 L1585.30 358.15 L1584.70 358.04 L1584.13 357.71 L1583.64 357.21 L1583.22 356.63 L1582.87 356.02 L1582.56 355.47 L1582.25 355.03 L1581.90 354.74 L1581.47 354.58 L1580.94 354.54 L1580.31 354.54 L1579.61 354.54 L1578.89 354.47 L1578.21 354.29 L1577.65 353.96 L1577.25 353.50 L1577.04 352.92 L1577.05 352.27 L1577.22 351.59 L1577.52 350.93 L1577.87 350.33 L1578.20 349.79 L1578.42 349.30 L1578.50 348.85 L1578.42 348.40 L1578.20 347.91 L1577.87 347.37 L1577.52 346.77 L1577.22 346.11 L1577.05 345.43 L1577.04 344.78 L1577.25 344.20 L1577.65 343.74 L1578.21 343.41 L1578.89 343.23 L1579.61 343.16 L1580.31 343.16 L1580.94 343.16 L1581.47 343.12 L1581.90 342.96 L1582.25 342.67 L1582.56 342.23 L1582.87 341.68 L1583.22 341.07 L1583.64 340.49 L1584.13 339.99 L1584.70 339.66Z" fill="none" stroke="#4d4d4d" stroke-width="1.5" stroke-linejoin="round"/><path d="M1587.90 347.65 A3.1 3.1 0 1 0 1585.70 352.45" fill="none" stroke="#4d4d4d" stroke-width="1.5" stroke-linecap="round"/><path d="M1594.50 348.95 L1586.20 357.15" stroke="#fff" stroke-width="6.4" stroke-linecap="round"/><path d="M1594.50 348.95 L1586.20 357.15" stroke="#4d4d4d" stroke-width="4.3" stroke-linecap="round"/><path d="M1594.50 348.95 L1587.10 356.25" stroke="#fff" stroke-width="1.5" stroke-linecap="round"/>
<path d="M98.3 116.4 H111.2 L104.7 122.4 Z" fill="#454545"/>
<g fill="none" stroke="#2a2a2a" stroke-width="1.3"><path d="M1510 20.7 H1523.2"/><rect x="1562.4" y="16.8" width="9.6" height="9.4" rx="2" stroke="#444"/><path d="M1565 16.4 V15.6 a1.6 1.6 0 0 1 1.6 -1.6 H1572.6 a2 2 0 0 1 2 2 V22 a1.6 1.6 0 0 1 -1.6 1.6 H1572.2" stroke="#555"/><path d="M1613.8 14.4 L1626.2 26.8 M1626.2 14.4 L1613.8 26.8" stroke-width="1.4"/></g>
<g fill="none" stroke="#4a4a4a" stroke-width="1.4" stroke-linecap="round" stroke-linejoin="round"><rect x="77.2" y="55.8" width="15.8" height="12.2" rx="1.8"/><path d="M81.6 56 V68 M84.6 62 H90 M87.8 59.6 L90.2 62 L87.8 64.4"/></g>
<g fill="none" stroke="#4a4a4a" stroke-width="1.4" stroke-linecap="round" stroke-linejoin="round" stroke-width="1.3"><circle cx="123.6" cy="61.6" r="6.4"/><path d="M117.4 61.6 H126 M123.6 55.2 q-3.6 6.4 0 12.8 M123.6 55.2 q2.4 3 2.6 6"/><rect x="126" y="60.8" width="5.6" height="8.6" rx="1.2" fill="#f5f5f5"/><path d="M128 67.6 h1.6"/></g>
<path d="M216.8 57.6 L222.7 64.4 L228.6 57.6" fill="none" stroke="#333" stroke-width="1.8" stroke-linecap="round" stroke-linejoin="round"/>
<path d="M377.2 57 L383.2 62.6 L377.2 68.2" fill="none" stroke="#444" stroke-width="1.5" stroke-linecap="round" stroke-linejoin="round"/>
<path d="M233.7 508.4 V521" stroke="#14a085" stroke-width="1.7" stroke-linecap="round"/><path d="M233.6 508 q2.6 -1 5.2 0 t5.3 -.2 V516 q-2.6 1.2 -5.3 .2 t-5.2 .2 Z" fill="#14a085"/>
<path d="M256.1 520.4 V526.4 H250 Z" fill="#6a6a6a"/>
<path d="M386.44 512.74 Q391.18 512.14 393.04 515.74 Q393.76 517.84 392.32 519.52 M388.78 510.52 L386.44 512.74 L388.78 514.90 M388.18 521.26 Q383.44 521.86 381.88 518.14 Q381.16 516.22 382.60 514.66 M385.84 519.04 L388.18 521.26 L385.84 523.66" fill="none" stroke="#777" stroke-width="1.2" stroke-linecap="round" stroke-linejoin="round"/>
<g fill="none" stroke="#555" stroke-width="1.3"><ellipse cx="81.2" cy="849" rx="5.8" ry="2.4"/><path d="M75.4 849 V856.6 a5.8 2.4 0 0 0 11.6 0 V849 M75.4 852.8 a5.8 2.4 0 0 0 11.6 0"/><circle cx="117.8" cy="852.6" r="6.4"/></g><path d="M117.8 849 V853.6" stroke="#e0463c" stroke-width="1.3" stroke-linecap="round"/><circle cx="117.8" cy="855.8" r=".8" fill="#e0463c"/>
</svg>
<div class="abs" style="left:30.8px;top:72.6px;width:147.2px;height:44.2px;background:#fff;border-radius:5px;box-shadow:0 1px 4px rgba(0,0,0,.07);"></div>
<div class="txt" style="left:44.4px;top:86px;height:19px;line-height:19px;font-size:13.5px;color:#6e6e6e;font-weight:400;letter-spacing:0.059px;">Create Task (Alt + I)</div>
<div id="fade"></div>
</div>
</body></html>
